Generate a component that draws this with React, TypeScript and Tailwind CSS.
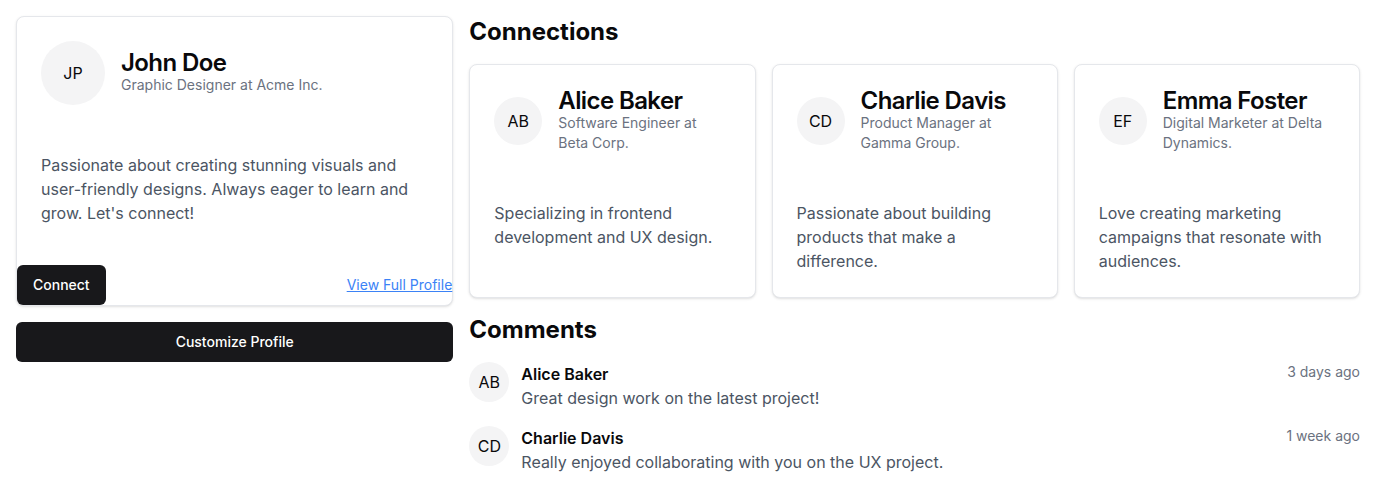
import React from 'react';

const connections = [
  {
    initials: 'AB',
    name: 'Alice Baker',
    title: 'Software Engineer at Beta Corp.',
    bio: 'Specializing in frontend development and UX design.',
  },
  {
    initials: 'CD',
    name: 'Charlie Davis',
    title: 'Product Manager at Gamma Group.',
    bio: 'Passionate about building products that make a difference.',
  },
  {
    initials: 'EF',
    name: 'Emma Foster',
    title: 'Digital Marketer at Delta Dynamics.',
    bio: 'Love creating marketing campaigns that resonate with audiences.',
  },
];

const comments = [
  { initials: 'AB', name: 'Alice Baker', text: 'Great design work on the latest project!', time: '3 days ago' },
  { initials: 'CD', name: 'Charlie Davis', text: 'Really enjoyed collaborating with you on the UX project.', time: '1 week ago' },
];

const Avatar: React.FC<{ initials: string; size: string }> = ({ initials, size }) => (
  <div className={`${size} shrink-0 rounded-full bg-[#f4f4f5] flex items-center justify-center text-base text-[#09090b]`}>
    {initials}
  </div>
);

export default function App() {
  return (
    <div className="min-h-screen bg-white p-4 font-['Inter',sans-serif] text-[#09090b]">
      <div className="grid grid-cols-3 gap-4">
        {/* profile column */}
        <div className="flex flex-col gap-4">
          <div className="rounded-lg border border-[#e5e7eb] bg-white shadow-sm">
            <div className="flex items-center gap-4 p-6">
              <Avatar initials="JP" size="w-16 h-16" />
              <div>
                <h1 className="text-2xl font-semibold leading-none tracking-tight">John Doe</h1>
                <p className="text-sm text-[#6b7280]">Graphic Designer at Acme Inc.</p>
              </div>
            </div>
            <div className="p-6">
              <p className="text-base text-[#4b5563]">
                Passionate about creating stunning visuals and user-friendly designs. Always eager to learn and grow. Let's connect!
              </p>
            </div>
            <div className="flex items-center justify-between mt-4">
              <button className="h-10 px-4 rounded-md bg-[#18181b] text-white text-sm font-medium">Connect</button>
              <a href="#" className="text-sm text-[#3b82f6] underline">View Full Profile</a>
            </div>
          </div>
          <button className="h-10 w-full rounded-md bg-[#18181b] text-white text-sm font-medium">Customize Profile</button>
        </div>

        {/* connections + comments */}
        <div className="col-span-2 flex flex-col">
          <h2 className="text-2xl font-bold mb-4">Connections</h2>
          <div className="grid grid-cols-3 gap-4">
            {connections.map((c) => (
              <div key={c.name} className="rounded-lg border border-[#e5e7eb] bg-white shadow-sm">
                <div className="flex items-center gap-4 p-6">
                  <Avatar initials={c.initials} size="w-12 h-12" />
                  <div className="pr-2">
                    <h3 className="text-2xl font-semibold leading-none tracking-tight">{c.name}</h3>
                    <p className="text-sm text-[#6b7280]">{c.title}</p>
                  </div>
                </div>
                <div className="p-6">
                  <p className="text-base text-[#4b5563]">{c.bio}</p>
                </div>
              </div>
            ))}
          </div>

          <h2 className="text-2xl font-bold mt-4 mb-4">Comments</h2>
          <div className="flex flex-col gap-4">
            {comments.map((c) => (
              <div key={c.name} className="flex items-start gap-3">
                <Avatar initials={c.initials} size="w-10 h-10" />
                <div className="flex-1">
                  <div className="flex items-start justify-between">
                    <h4 className="text-base font-semibold">{c.name}</h4>
                    <span className="text-sm text-[#6b7280]">{c.time}</span>
                  </div>
                  <p className="text-base text-[#4b5563]">{c.text}</p>
                </div>
              </div>
            ))}
          </div>
        </div>
      </div>
    </div>
  );
}
